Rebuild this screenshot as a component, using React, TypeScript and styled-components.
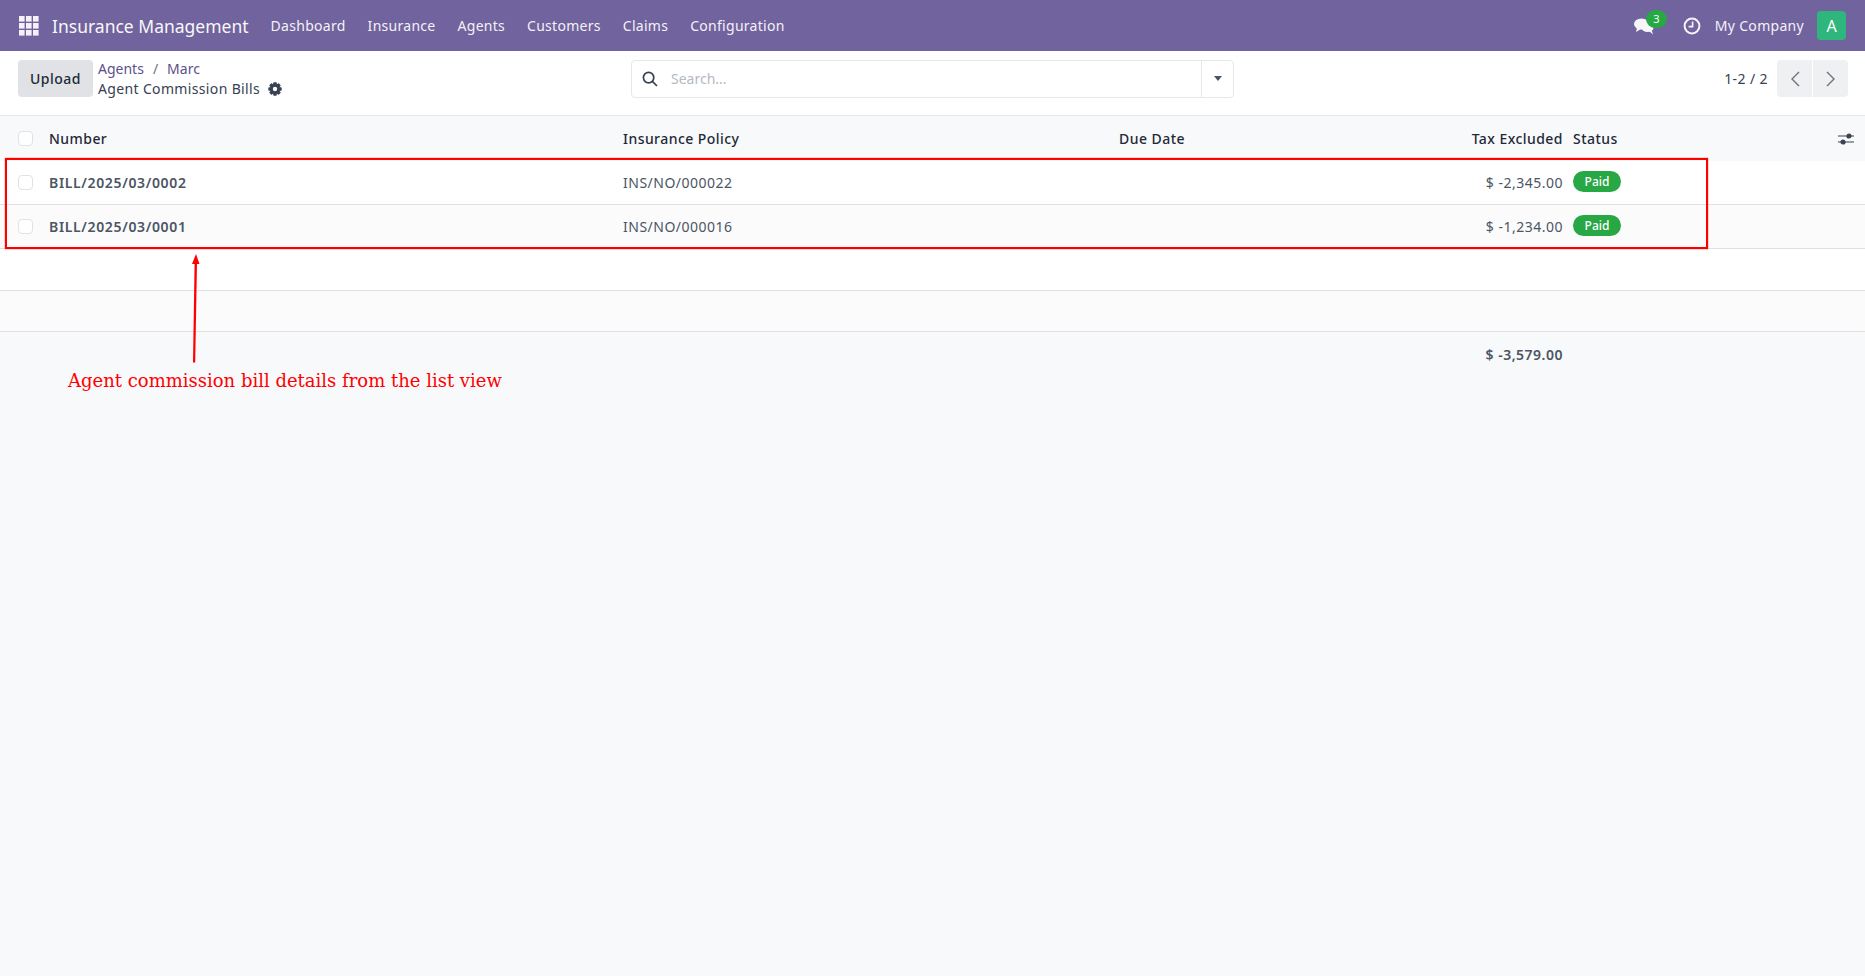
import React from "react";
import styled, { createGlobalStyle } from "styled-components";

const Global = createGlobalStyle`
  html, body { margin: 0; padding: 0; height: 100%; }
  body { background: #f8f9fb; font-family: "Noto Sans", "Open Sans", sans-serif; font-size: 14px; color: #374151; overflow: hidden; }
  * { box-sizing: border-box; }
`;

const Page = styled.div`
  position: relative;
  width: 1865px;
  height: 976px;
  background: #f8f9fb;
`;

const Navbar = styled.header`
  height: 51px;
  background: #71639e;
  color: #fff;
  display: flex;
  align-items: center;
  padding: 0 19px 0 19px;
`;
const AppGrid = styled.svg`
  width: 20px;
  height: 20px;
  margin-right: 13px;
  flex: none;
`;
const Brand = styled.span`
  font-size: 17.5px;
  margin-right: 22px;
  opacity: 0.95;
`;
const NavItem = styled.span`
  font-size: 14px;
  letter-spacing: 0.28px;
  margin-right: 22px;
  color: #f3f1f7;
`;
const NavRight = styled.div`
  margin-left: auto;
  display: flex;
  align-items: center;
`;
const Chat = styled.div`
  position: relative;
  width: 20px;
  height: 18px;
  margin-right: 29px;
`;
const Count = styled.span`
  position: absolute;
  left: 12px;
  top: -7px;
  width: 21px;
  height: 18px;
  border-radius: 9px;
  background: #28a745;
  color: #fff;
  font-size: 11px;
  line-height: 18px;
  text-align: center;
`;
const Company = styled.span`
  font-size: 14px;
  letter-spacing: 0.3px;
  margin: 0 13px 0 14px;
  color: #f3f1f7;
`;
const Avatar = styled.span`
  width: 29px;
  height: 29px;
  border-radius: 4px;
  background: #2eb67d;
  color: #fff;
  font-size: 16px;
  display: flex;
  align-items: center;
  justify-content: center;
`;

const Control = styled.div`
  height: 65px;
  background: #fff;
  border-bottom: 1px solid #e5e7eb;
  display: grid;
  grid-template-columns: 613px 603px 1fr;
  align-items: center;
  padding: 0 17px 9px 18px;
`;
const LeftGroup = styled.div`
  display: flex;
  align-items: center;
  gap: 5px;
`;
const UploadBtn = styled.button`
  width: 75px;
  height: 37px;
  border: none;
  border-radius: 4px;
  background: #e0e2e6;
  color: #1f2937;
  font: 500 14px "Noto Sans", sans-serif;
  letter-spacing: 0.5px;
  padding: 0;
`;
const Crumbs = styled.div`
  display: flex;
  flex-direction: column;
  font-size: 14px;
  line-height: 20px;
`;
const CrumbLine = styled.div`
  display: flex;
  align-items: center;
  gap: 9px;
`;
const CrumbLink = styled.span`
  color: #5d4f8a;
`;
const CrumbSep = styled.span`
  color: #6b7280;
`;
const CrumbTitle = styled.div`
  display: flex;
  align-items: center;
  gap: 8px;
  color: #374151;
  letter-spacing: 0.35px;
`;
const Search = styled.div`
  height: 38px;
  border: 1px solid #e5e7eb;
  border-radius: 4px;
  display: flex;
  align-items: center;
  background: #fff;
`;
const SearchIcon = styled.svg`
  width: 16px;
  height: 16px;
  margin: 0 13px 0 10px;
  flex: none;
`;
const Placeholder = styled.span`
  flex: 1;
  color: #b4b9c2;
  font-size: 14px;
`;
const Caret = styled.span`
  width: 32px;
  height: 100%;
  border-left: 1px solid #e5e7eb;
  display: flex;
  align-items: center;
  justify-content: center;
  &::after {
    content: "";
    border-left: 4.5px solid transparent;
    border-right: 4.5px solid transparent;
    border-top: 5px solid #4b5563;
  }
`;
const Pager = styled.div`
  display: flex;
  align-items: center;
  justify-content: flex-end;
  gap: 9px;
`;
const PagerText = styled.span`
  font-size: 14px;
  letter-spacing: 0.4px;
  color: #374151;
`;
const PagerBtns = styled.div`
  display: flex;
  gap: 1px;
`;
const PagerBtn = styled.span<{ $side: "l" | "r" }>`
  width: 35px;
  height: 37px;
  background: #eff0f2;
  display: flex;
  align-items: center;
  justify-content: center;
  border-radius: ${(p) => (p.$side === "l" ? "4px 0 0 4px" : "0 4px 4px 0")};
`;

const Row = styled.div<{ $bg?: string; $h: number; $line?: boolean }>`
  display: grid;
  grid-template-columns: 49px 574px 496px 280px 174px 1fr 50px;
  align-items: center;
  height: ${(p) => p.$h}px;
  background: ${(p) => p.$bg || "transparent"};
  border-bottom: ${(p) => (p.$line ? "1px solid #dee0e6" : "none")};
  font-size: 14px;
`;
const HeadCell = styled.span<{ $right?: boolean }>`
  font-weight: 500;
  color: #1f2937;
  letter-spacing: 0.45px;
  text-align: ${(p) => (p.$right ? "right" : "left")};
  padding-right: ${(p) => (p.$right ? "10px" : "0")};
`;
const Cell = styled.span<{ $right?: boolean; $bold?: boolean; $wide?: boolean }>`
  color: #4b5563;
  font-weight: ${(p) => (p.$bold ? 600 : 400)};
  letter-spacing: ${(p) => (p.$wide ? "0.65px" : "0.5px")};
  text-align: ${(p) => (p.$right ? "right" : "left")};
  padding-right: ${(p) => (p.$right ? "10px" : "0")};
`;
const Check = styled.span`
  width: 15px;
  height: 15px;
  margin-left: 18px;
  border: 1px solid #dfe2e7;
  border-radius: 4px;
  background: #fff;
  display: block;
`;
const Badge = styled.span`
  display: inline-block;
  width: 48px;
  height: 21px;
  margin-top: -2px;
  border-radius: 11px;
  background: #28a745;
  color: #fff;
  font-size: 12px;
  font-weight: 500;
  line-height: 21px;
  text-align: center;
`;
const Tune = styled.svg`
  width: 16px;
  height: 14px;
  justify-self: end;
  margin-right: 11px;
`;

const RedBox = styled.div`
  position: absolute;
  left: 5px;
  top: 158px;
  width: 1703px;
  height: 91px;
  border: 2px solid #f00;
  box-shadow: 0 0 1px #f00;
  pointer-events: none;
`;
const Arrow = styled.svg`
  position: absolute;
  left: 185px;
  top: 250px;
  width: 20px;
  height: 116px;
`;
const Note = styled.div`
  position: absolute;
  left: 68px;
  top: 369px;
  font-family: "DejaVu Serif", serif;
  font-size: 18px;
  line-height: 24px;
  color: #f00;
  white-space: nowrap;
`;

const rows = [
  { n: "BILL/2025/03/0002", p: "INS/NO/000022", a: "$ -2,345.00", bg: "#fff" },
  { n: "BILL/2025/03/0001", p: "INS/NO/000016", a: "$ -1,234.00", bg: "#fbfbfc" },
];

export default function App() {
  return (
    <Page>
      <Global />
      <Navbar>
        <AppGrid viewBox="0 0 20 20" fill="#f4f2f8">
          {[0, 7, 14].flatMap((y) =>
            [0, 7, 14].map((x) => <rect key={`${x}-${y}`} x={x} y={y} width="5.6" height="5.6" />)
          )}
        </AppGrid>
        <Brand>Insurance Management</Brand>
        {["Dashboard", "Insurance", "Agents", "Customers", "Claims", "Configuration"].map((t) => (
          <NavItem key={t}>{t}</NavItem>
        ))}
        <NavRight>
          <Chat>
            <svg width="20" height="18" viewBox="0 0 20 18" fill="#f6f5f9">
              <ellipse cx="7.5" cy="7" rx="7.5" ry="5.5" />
              <path d="M3 10.5 L2 15 L7 12z" />
              <ellipse cx="13.5" cy="11" rx="6" ry="4" />
              <path d="M15 14 L19 17.5 L17.5 12.5z" />
            </svg>
            <Count>3</Count>
          </Chat>
          <svg width="18" height="18" viewBox="0 0 18 18" fill="none" stroke="#f6f5f9">
            <circle cx="9" cy="9" r="7.4" strokeWidth="2" />
            <path d="M9.6 4.6V9.6H5.6" strokeWidth="1.6" />
          </svg>
          <Company>My Company</Company>
          <Avatar>A</Avatar>
        </NavRight>
      </Navbar>

      <Control>
        <LeftGroup>
          <UploadBtn>Upload</UploadBtn>
          <Crumbs>
            <CrumbLine>
              <CrumbLink>Agents</CrumbLink>
              <CrumbSep>/</CrumbSep>
              <CrumbLink>Marc</CrumbLink>
            </CrumbLine>
            <CrumbTitle>
              Agent Commission Bills
              <svg width="14" height="14" viewBox="0 0 14 14">
                <g fill="#374151">
                  {[0, 45, 90, 135].map((r) => (
                    <rect key={r} x="5.2" y="0.3" width="3.6" height="13.4" rx="0.8" transform={`rotate(${r} 7 7)`} />
                  ))}
                  <circle cx="7" cy="7" r="5" />
                </g>
                <circle cx="7" cy="7" r="2.2" fill="#fff" />
              </svg>
            </CrumbTitle>
          </Crumbs>
        </LeftGroup>
        <Search>
          <SearchIcon viewBox="0 0 16 16" fill="none" stroke="#374151" strokeWidth="1.7">
            <circle cx="6.6" cy="6.6" r="5.2" />
            <path d="M10.4 10.4L15 15" />
          </SearchIcon>
          <Placeholder>Search...</Placeholder>
          <Caret />
        </Search>
        <Pager>
          <PagerText>1-2 / 2</PagerText>
          <PagerBtns>
            <PagerBtn $side="l">
              <svg width="12" height="16" viewBox="0 0 12 16" fill="none" stroke="#6b7280" strokeWidth="1.4">
                <path d="M10 1L3 8l7 7" />
              </svg>
            </PagerBtn>
            <PagerBtn $side="r">
              <svg width="12" height="16" viewBox="0 0 12 16" fill="none" stroke="#6b7280" strokeWidth="1.4">
                <path d="M2 1l7 7-7 7" />
              </svg>
            </PagerBtn>
          </PagerBtns>
        </Pager>
      </Control>

      <Row $h={45}>
        <Check />
        <HeadCell>Number</HeadCell>
        <HeadCell>Insurance Policy</HeadCell>
        <HeadCell>Due Date</HeadCell>
        <HeadCell $right>Tax Excluded</HeadCell>
        <HeadCell>Status</HeadCell>
        <Tune viewBox="0 0 16 14" stroke="#374151" strokeWidth="1.2" fill="#374151">
          <path d="M0 4h16M0 10h16" fill="none" />
          <circle cx="11" cy="4" r="2" />
          <circle cx="5" cy="10" r="2" />
        </Tune>
      </Row>
      {rows.map((r) => (
        <Row key={r.n} $h={44} $bg={r.bg} $line>
          <Check />
          <Cell $bold $wide>{r.n}</Cell>
          <Cell>{r.p}</Cell>
          <span />
          <Cell $right>{r.a}</Cell>
          <Badge>Paid</Badge>
          <span />
        </Row>
      ))}
      <Row $h={42} $bg="#fff" $line />
      <Row $h={41} $bg="#fbfbfc" $line />
      <Row $h={44}>
        <span />
        <span />
        <span />
        <span />
        <Cell $right $bold>$ -3,579.00</Cell>
      </Row>
      <RedBox />
      <Arrow viewBox="0 0 20 116" fill="#f00" stroke="none">
        <path d="M11 4 L7 14 L14.5 14 Z" />
        <path d="M9.6 13 L12 13 L10.2 112.5 L8 112.5 Z" />
      </Arrow>
      <Note>Agent commission bill details from the list view</Note>
    </Page>
  );
}
